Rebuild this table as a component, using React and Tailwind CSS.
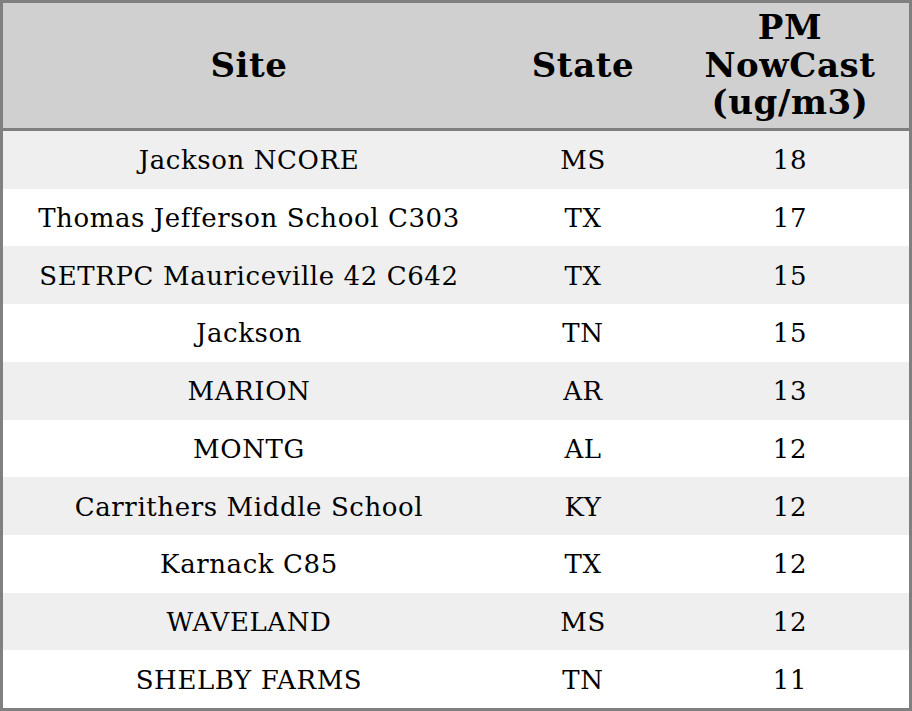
import React from "react";

const rows = [
  ["Jackson NCORE", "MS", "18"],
  ["Thomas Jefferson School C303", "TX", "17"],
  ["SETRPC Mauriceville 42 C642", "TX", "15"],
  ["Jackson", "TN", "15"],
  ["MARION", "AR", "13"],
  ["MONTG", "AL", "12"],
  ["Carrithers Middle School", "KY", "12"],
  ["Karnack C85", "TX", "12"],
  ["WAVELAND", "MS", "12"],
  ["SHELBY FARMS", "TN", "11"],
];

export default function App() {
  return (
    <div className="w-[912px] h-[711px] bg-white" style={{ fontFamily: '"DejaVu Serif", serif' }}>
      <div className="w-[912px] h-[711px] border-[3px] border-[#808080] flex flex-col text-black">
        <div className="grid grid-cols-[492px_176px_238px] h-[128px] shrink-0 bg-[#d0d0d0] border-b-[3px] border-[#808080] font-bold text-[34px] leading-[37.5px] tracking-[0.6px] items-center text-center">
          <div>Site</div>
          <div>State</div>
          <div className="px-4">PM NowCast (ug/m3)</div>
        </div>
        <div className="flex flex-col flex-1">
          {rows.map((r, i) => (
            <div
              key={i}
              className={`grid grid-cols-[492px_176px_238px] flex-1 items-center text-center text-[26px] tracking-[0.6px] pt-[2px] ${i % 2 === 0 ? "bg-[#efefef]" : "bg-white"}`}
            >
              <div>{r[0]}</div>
              <div>{r[1]}</div>
              <div>{r[2]}</div>
            </div>
          ))}
        </div>
      </div>
    </div>
  );
}
